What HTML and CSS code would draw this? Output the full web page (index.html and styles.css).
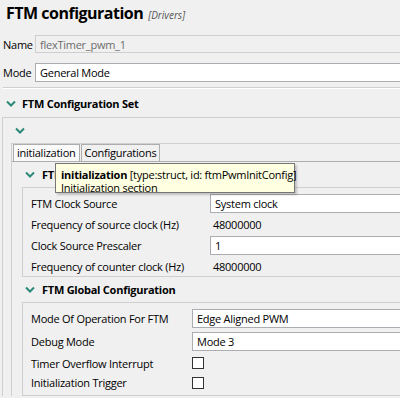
FILE: index.html
```html
<html>

<head>
  <link rel="stylesheet" href="styles.css">
</head>

<body>
  <div id="editor">
    <div class="title">
      <h1>FTM configuration</h1>
      <span class="tag">[Drivers]</span>
    </div>

    <div class="prop">
      <label>Name</label>
      <div class="field disabled">flexTimer_pwm_1</div>
    </div>
    <div class="prop mode">
      <label>Mode</label>
      <div class="field">General Mode</div>
    </div>

    <div class="sep"></div>

    <div class="section-head">
      <svg class="chev" width="10" height="7" viewBox="0 0 10 7"><path d="M1 1.5 L5 5.5 L9 1.5" /></svg>
      <span>FTM Configuration Set</span>
    </div>

    <div class="set-box">
      <div class="twisty">
        <svg class="chev" width="10" height="7" viewBox="0 0 10 7"><path d="M1 1.5 L5 5.5 L9 1.5" /></svg>
      </div>

      <div class="tabfolder">
        <div class="tabs">
          <div class="tab active">initialization</div>
          <div class="tab">Configurations</div>
        </div>
        <div class="tab-body">
          <div class="group-head">
            <svg class="chev" width="10" height="7" viewBox="0 0 10 7"><path d="M1 1.5 L5 5.5 L9 1.5" /></svg>
            <span>FTM Clock Configuration</span>
          </div>
          <div class="group clock">
            <label>FTM Clock Source</label>
            <div class="field">System clock</div>
            <label>Frequency of source clock (Hz)</label>
            <div class="value">48000000</div>
            <label>Clock Source Prescaler</label>
            <div class="field">1</div>
            <label>Frequency of counter clock (Hz)</label>
            <div class="value">48000000</div>
          </div>

          <div class="group-head">
            <svg class="chev" width="10" height="7" viewBox="0 0 10 7"><path d="M1 1.5 L5 5.5 L9 1.5" /></svg>
            <span>FTM Global Configuration</span>
          </div>
          <div class="group global">
            <label>Mode Of Operation For FTM</label>
            <div class="field">Edge Aligned PWM</div>
            <label>Debug Mode</label>
            <div class="field">Mode 3</div>
            <label>Timer Overflow Interrupt</label>
            <div class="check-cell"><span class="check"></span></div>
            <label>Initialization Trigger</label>
            <div class="check-cell"><span class="check"></span></div>
          </div>
        </div>
      </div>
    </div>

    <div class="tooltip">
      <div><b>initialization</b> [type:struct, id: ftmPwmInitConfig]</div>
      <div>Initialization section</div>
    </div>
  </div>
</body>

</html>
```

FILE: styles.css
```css
html,
body {
  margin: 0;
  padding: 0;
  overflow: hidden;
  background: #f0f0f0;
}

#editor {
  position: relative;
  width: 400px;
  height: 398px;
  overflow: hidden;
  font-family: 'Open Sans', 'Noto Sans', sans-serif;
  font-size: 11px;
  letter-spacing: -0.25px;
  color: #000;
}

.title {
  display: flex;
  align-items: baseline;
  padding: 1px 0 0 6px;
  height: 34px;
}

.title h1 {
  margin: 0;
  font-size: 16px;
  font-weight: bold;
  letter-spacing: -0.5px;
  line-height: 24px;
}

.title .tag {
  margin-left: 5px;
  font-size: 10px;
  font-style: italic;
  letter-spacing: 0;
  color: #555;
}

.prop {
  display: flex;
  align-items: center;
  padding-left: 3px;
  height: 18px;
}

.prop.mode {
  margin-top: 10px;
  height: 19px;
}

.prop label {
  width: 32px;
}

.field {
  flex: 1;
  box-sizing: border-box;
  height: 100%;
  background: #fff;
  border: 1px solid #abadb3;
  border-right: none;
  padding-left: 4px;
  line-height: 17px;
  white-space: nowrap;
}

.field.disabled {
  background: #f0f0f0;
  border-color: #cfcfcf;
  color: #6d6d6d;
}

.sep {
  margin: 5px 0 0 3px;
  border-top: 1px solid #cfcfcf;
  border-bottom: 1px solid #fff;
}

.chev {
  fill: none;
  stroke: #2a8a78;
  stroke-width: 2;
}

.section-head {
  display: flex;
  align-items: center;
  height: 28px;
  padding-left: 6px;
  font-weight: bold;
}

.section-head span {
  margin-left: 6px;
}

.set-box {
  margin-left: 2px;
  border-top: 1px solid #cfcfcf;
  border-left: 1px solid #cfcfcf;
}

.twisty {
  height: 25px;
  padding-left: 12px;
  display: flex;
  align-items: center;
}

.tabfolder {
  margin-left: 8px;
  border-top: 1px solid #cfcfcf;
  border-left: 1px solid #cfcfcf;
}

.tabs {
  display: flex;
  height: 17px;
  padding-left: 1px;
}

.tab {
  box-sizing: border-box;
  height: 17px;
  padding: 0 3px;
  line-height: 16px;
  border: 1px solid #adadad;
  border-bottom: none;
  margin-right: 1px;
}

.tab.active {
  background: #fafafa;
}

.tab-body {
  border-top: 1px solid #adadad;
  padding-left: 10px;
}

.group-head {
  display: flex;
  align-items: center;
  height: 25px;
  padding-left: 3px;
  font-weight: bold;
}

.group-head span {
  margin-left: 7px;
}

.group {
  display: grid;
  align-items: center;
  border-top: 1px solid #cfcfcf;
  border-left: 1px solid #cfcfcf;
  border-bottom: 1px solid #cfcfcf;
  padding-left: 8px;
}

.group.clock {
  grid-template-columns: 179px 1fr;
  grid-auto-rows: 21px;
  padding-top: 5px;
  height: 83px;
}

.group.global {
  grid-template-columns: 161px 1fr;
  grid-template-rows: 24px 23px 20px 19px;
  padding-top: 3px;
  padding-bottom: 3px;
}

.group .field {
  height: 19px;
}

.group .value {
  padding-left: 3px;
}

.check {
  display: block;
  width: 12px;
  height: 12px;
  box-sizing: border-box;
  background: #fff;
  border: 1px solid #333;
}

.tooltip {
  position: absolute;
  left: 55px;
  top: 163px;
  width: 240px;
  height: 30px;
  box-sizing: border-box;
  padding: 4px 5px 0 5px;
  background: #ffffe1;
  border: 1px solid #767676;
  box-shadow: 2px 2px 2px rgba(0, 0, 0, 0.2);
  line-height: 13px;
  white-space: nowrap;
}
```
